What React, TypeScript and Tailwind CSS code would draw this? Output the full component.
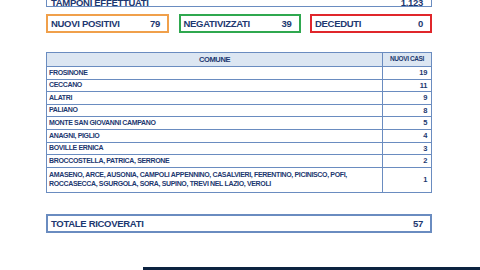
import React from "react";

const rows: { comune: string[]; casi: number }[] = [
  { comune: ["FROSINONE"], casi: 19 },
  { comune: ["CECCANO"], casi: 11 },
  { comune: ["ALATRI"], casi: 9 },
  { comune: ["PALIANO"], casi: 8 },
  { comune: ["MONTE SAN GIOVANNI CAMPANO"], casi: 5 },
  { comune: ["ANAGNI, PIGLIO"], casi: 4 },
  { comune: ["BOVILLE ERNICA"], casi: 3 },
  { comune: ["BROCCOSTELLA, PATRICA, SERRONE"], casi: 2 },
  {
    comune: [
      "AMASENO, ARCE, AUSONIA, CAMPOLI APPENNINO, CASALVIERI, FERENTINO, PICINISCO, POFI,",
      "ROCCASECCA, SGURGOLA, SORA, SUPINO, TREVI NEL LAZIO, VEROLI",
    ],
    casi: 1,
  },
];

// Coloured summary boxes under the tamponi line
const stats = [
  { label: "NUOVI POSITIVI", value: "79", border: "border-[#f0a04b]", w: "w-[123px]" },
  { label: "NEGATIVIZZATI", value: "39", border: "border-[#2fa84f]", w: "w-[122px]" },
  { label: "DECEDUTI", value: "0", border: "border-[#e0262b]", w: "w-[122px]" },
];

export default function App() {
  return (
    <div
      className="relative w-[480px] h-[270px] overflow-hidden bg-white text-[#1d3870] font-bold"
      style={{ fontFamily: '"Liberation Sans", Arial, sans-serif' }}
    >
      <div className="ml-[46px] w-[386px]">
        <div className="mt-[-12px] h-[19px] border-[1.5px] border-[#6a8cc0] flex items-end justify-between pl-[4px] pr-[8px] text-[9.5px] tracking-[-0.3px] leading-none">
          <span className="translate-y-[1px]">TAMPONI EFFETTUATI</span>
          <span className="translate-y-[1px]">1.123</span>
        </div>

        <div className="mt-[7px] flex justify-between">
          {stats.map((s) => (
            <div
              key={s.label}
              className={`${s.w} ${s.border} h-[19px] border-2 flex items-center justify-between pl-[3px] pr-[7px] text-[9.5px] tracking-[-0.3px] leading-none`}
            >
              <span>{s.label}</span>
              <span>{s.value}</span>
            </div>
          ))}
        </div>

        <table className="mt-[19px] w-full border-collapse border border-[#6a8cc0] text-[7px] tracking-[-0.35px] leading-none">
          <thead>
            <tr className="h-[14px] bg-[#dce6f2]">
              <th className="border border-[#6a8cc0] text-center font-bold text-[7.5px]">COMUNE</th>
              <th className="w-[49px] border border-[#6a8cc0] text-center font-bold text-[6.5px] tracking-[-0.4px]">NUOVI CASI</th>
            </tr>
          </thead>
          <tbody>
            {rows.map((r) => (
              <tr key={r.comune[0]} className={r.comune.length > 1 ? "h-[25px]" : "h-[12.6px]"}>
                <td className="border border-[#6a8cc0] px-[2px] text-left leading-[8.5px]">
                  {r.comune.map((c) => (
                    <div key={c}>{c}</div>
                  ))}
                </td>
                <td className="border border-[#6a8cc0] pr-[4px] text-right text-[7.5px]">{r.casi}</td>
              </tr>
            ))}
          </tbody>
        </table>

        <div className="mt-[21px] h-[19px] border-2 border-[#6a8cc0] flex items-center justify-between pl-[3px] pr-[7px] text-[9.5px] tracking-[-0.3px] leading-none">
          <span>TOTALE RICOVERATI</span>
          <span>57</span>
        </div>
      </div>

      <div className="absolute left-[143px] right-0 bottom-0 h-[3px] bg-[#0c2340]" />
    </div>
  );
}
